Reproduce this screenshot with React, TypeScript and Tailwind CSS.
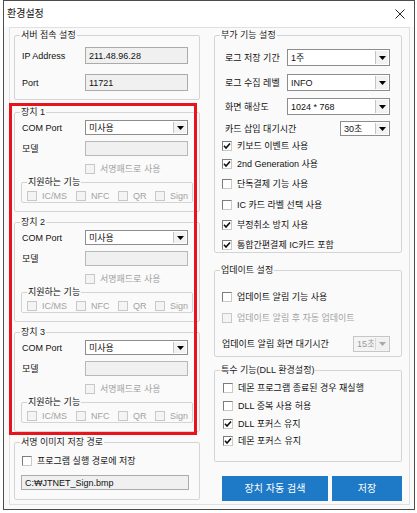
import React from "react";

type Kids = { children?: React.ReactNode; className?: string };

function GroupBox({ title, className = "", children }: Kids & { title: string }) {
  return (
    <fieldset className={`rounded-[2px] border border-[#d4d4d4] ${className}`}>
      <legend className="ml-[5px] px-[1px] leading-[14px] text-[#1a1a1a]">{title}</legend>
      {children}
    </fieldset>
  );
}

function Check({ checked = false, disabled = false }: { checked?: boolean; disabled?: boolean }) {
  return (
    <span
      className={`flex h-[10px] w-[10px] shrink-0 items-center justify-center border ${
        disabled
          ? "border-[#c8c8c8] bg-[#f4f4f4]"
          : "border-t-[#7c7c7c] border-l-[#7c7c7c] border-r-[#c9c9c9] border-b-[#c9c9c9] bg-white"
      }`}
    >
      {checked && (
        <svg width="8" height="8" viewBox="0 0 8 8">
          <path d="M1 3.8 L3 6 L7 1.5" fill="none" stroke="#111" strokeWidth="1.6" />
        </svg>
      )}
    </span>
  );
}

function CheckRow({
  label,
  checked,
  disabled,
  className = "",
}: {
  label: string;
  checked?: boolean;
  disabled?: boolean;
  className?: string;
}) {
  return (
    <div className={`flex h-[12px] items-center gap-[5px] ${className}`}>
      <Check checked={checked} disabled={disabled} />
      <span className={`whitespace-nowrap ${disabled ? "text-[#a3a3a3]" : ""}`}>{label}</span>
    </div>
  );
}

function Combo({ value, className = "", disabled = false }: { value: string; className?: string; disabled?: boolean }) {
  return (
    <div
      className={`flex items-stretch border ${
        disabled ? "border-[#c6c6c6] bg-[#f4f4f4] text-[#9a9a9a]" : "border-[#8d8d8d] bg-white"
      } ${className}`}
    >
      <span className="flex flex-1 items-center overflow-hidden whitespace-nowrap px-[3px]">{value}</span>
      <span
        className={`m-[1px] flex w-[13px] items-center justify-center border-l ${
          disabled ? "border-[#d6d6d6] bg-[#f0f0f0]" : "border-[#c4c4c4] bg-[#f2f2f2]"
        }`}
      >
        <svg width="7" height="4" viewBox="0 0 7 4">
          <path d="M0 0 H7 L3.5 4 Z" fill={disabled ? "#a8a8a8" : "#000"} />
        </svg>
      </span>
    </div>
  );
}

function Device({ n }: { n: number }) {
  return (
    <GroupBox title={`장치 ${n}`} className="mt-[3px] first:mt-[5px]">
      <div className="pl-[7px] pb-[8px]">
        <div className="mt-[1px] flex h-[15px] items-center">
          <span className="w-[63px]">COM Port</span>
          <Combo value="미사용" className="h-[15px] w-[103px]" />
        </div>
        <div className="mt-[6px] flex h-[15px] items-center">
          <span className="w-[63px]">모델</span>
          <div className="h-[15px] w-[103px] border border-[#b8b8b8] bg-[#f0f0f0]" />
        </div>
        <CheckRow className="ml-[63px] mt-[7px]" disabled label="서명패드로 사용" />
        <fieldset className="ml-[-1px] w-[172px] rounded-[2px] border border-[#d4d4d4]">
          <legend className="ml-[5px] px-[1px] leading-[14px]">지원하는 기능</legend>
          <div className="mt-[1px] flex h-[12px] items-center pl-[5px]">
            <CheckRow className="w-[49px]" disabled label="IC/MS" />
            <CheckRow className="w-[42px]" disabled label="NFC" />
            <CheckRow className="w-[37px]" disabled label="QR" />
            <CheckRow disabled label="Sign" />
          </div>
        </fieldset>
      </div>
    </GroupBox>
  );
}

export default function App() {
  return (
    <div className="h-[513px] w-[417px] bg-white pb-[3px] pl-[3px] pr-[2px] font-['Liberation_Sans','Noto_Sans_CJK_KR',sans-serif] text-[9px] leading-[12px] text-[#111]">
      <div className="flex h-full flex-col border border-[#4d4d4d] bg-[#fafafa]">
        <div className="flex h-[26px] shrink-0 items-center justify-between bg-white pl-[3px] pr-[9px]">
          <span className="text-[10px]">환경설정</span>
          <svg width="10" height="10" viewBox="0 0 10 10">
            <path d="M0.5 0.5 L9.5 9.5 M9.5 0.5 L0.5 9.5" stroke="#222" strokeWidth="1" />
          </svg>
        </div>
        <div className="flex-1 pb-[4px] pl-[5px] pr-[4px]">
          <div className="flex h-full border border-[#e0e0e0] pl-[4px] pr-[6px]">
            {/* left column */}
            <div className="relative flex w-[186px] flex-col">
              <GroupBox title="서버 접속 설정">
                <div className="pb-[8px] pl-[7px]">
                  <div className="mt-[5px] flex h-[17px] items-center">
                    <span className="w-[63px]">IP Address</span>
                    <div className="flex h-[17px] w-[103px] items-center border border-[#ababab] bg-[#f0f0f0] px-[3px]">
                      211.48.96.28
                    </div>
                  </div>
                  <div className="mt-[10px] flex h-[17px] items-center">
                    <span className="w-[63px]">Port</span>
                    <div className="flex h-[17px] w-[103px] items-center border border-[#ababab] bg-[#f0f0f0] px-[3px]">
                      11721
                    </div>
                  </div>
                </div>
              </GroupBox>

              <div className="flex flex-col">
                <Device n={1} />
                <Device n={2} />
                <Device n={3} />
              </div>

              <GroupBox title="서명 이미지 저장 경로" className="mt-[3px]">
                <div className="pb-[9px] pl-[7px]">
                  <CheckRow className="mt-[6px]" label="프로그램 실행 경로에 저장" />
                  <div className="ml-[-1px] mt-[8px] flex h-[15px] w-[168px] items-center border border-[#ababab] bg-[#f0f0f0] px-[3px]">
                    C:₩JTNET_Sign.bmp
                  </div>
                </div>
              </GroupBox>

              {/* annotation frame drawn over the device groups */}
              <div className="pointer-events-none absolute left-[-5px] top-[75px] h-[332px] w-[188px] border-[3px] border-[#e8131b]" />
            </div>

            {/* right column */}
            <div className="ml-[14px] flex w-[188px] flex-col">
              <GroupBox title="부가 기능 설정">
                <div className="pb-[1px] pl-[7px]">
                  <div className="mt-[7px] flex h-[17px] items-center">
                    <span className="ml-[3px] w-[62px]">로그 저장 기간</span>
                    <Combo value="1주" className="h-[17px] w-[103px]" />
                  </div>
                  <div className="mt-[8px] flex h-[17px] items-center">
                    <span className="ml-[3px] w-[62px]">로그 수집 레벨</span>
                    <Combo value="INFO" className="h-[17px] w-[103px]" />
                  </div>
                  <div className="mt-[7px] flex h-[17px] items-center">
                    <span className="ml-[3px] w-[62px]">화면 해상도</span>
                    <Combo value="1024 * 768" className="h-[17px] w-[103px]" />
                  </div>
                  <div className="mt-[6px] flex h-[15px] items-center">
                    <span className="ml-[3px] w-[115px]">카드 삽입 대기시간</span>
                    <Combo value="30초" className="h-[15px] w-[50px]" />
                  </div>
                  <CheckRow className="mt-[4px]" checked label="키보드 이벤트 사용" />
                  <CheckRow className="mt-[6px]" checked label="2nd Generation 사용" />
                  <CheckRow className="mt-[8px]" label="단독결제 기능 사용" />
                  <CheckRow className="mt-[9px]" label="IC 카드 라벨 선택 사용" />
                  <CheckRow className="mt-[8px]" checked label="부정취소 방지 사용" />
                  <CheckRow className="mt-[8px]" checked label="통합간편결제 IC카드 포함" />
                </div>
              </GroupBox>

              <GroupBox title="업데이트 설정" className="mt-[10px]">
                <div className="pb-[4px] pl-[7px]">
                  <CheckRow className="mt-[14px]" label="업데이트 알림 기능 사용" />
                  <CheckRow className="mt-[9px]" disabled label="업데이트 알림 후 자동 업데이트" />
                  <div className="mt-[12px] flex h-[16px] items-center">
                    <span className="w-[131px]">업데이트 알림 화면 대기시간</span>
                    <Combo value="15초" disabled className="h-[16px] w-[37px]" />
                  </div>
                </div>
              </GroupBox>

              <GroupBox title="특수 기능(DLL 환경설정)" className="mt-[6px]">
                <div className="pb-[14px] pl-[8px]">
                  <CheckRow className="mt-[5px]" label="데몬 프로그램 종료된 경우 재실행" />
                  <CheckRow className="mt-[6px]" label="DLL 중복 사용 허용" />
                  <CheckRow className="mt-[6px]" checked label="DLL 포커스 유지" />
                  <CheckRow className="mt-[5px]" checked label="데몬 포커스 유지" />
                </div>
              </GroupBox>

              <div className="ml-[8px] mt-[14px] flex gap-[4px]">
                <button className="flex h-[25px] w-[106px] items-center justify-center bg-[#1e79c6] text-[10px] text-white">
                  장치 자동 검색
                </button>
                <button className="flex h-[25px] w-[70px] items-center justify-center bg-[#1e79c6] text-[10px] text-white">
                  저장
                </button>
              </div>
            </div>
          </div>
        </div>
      </div>
    </div>
  );
}
